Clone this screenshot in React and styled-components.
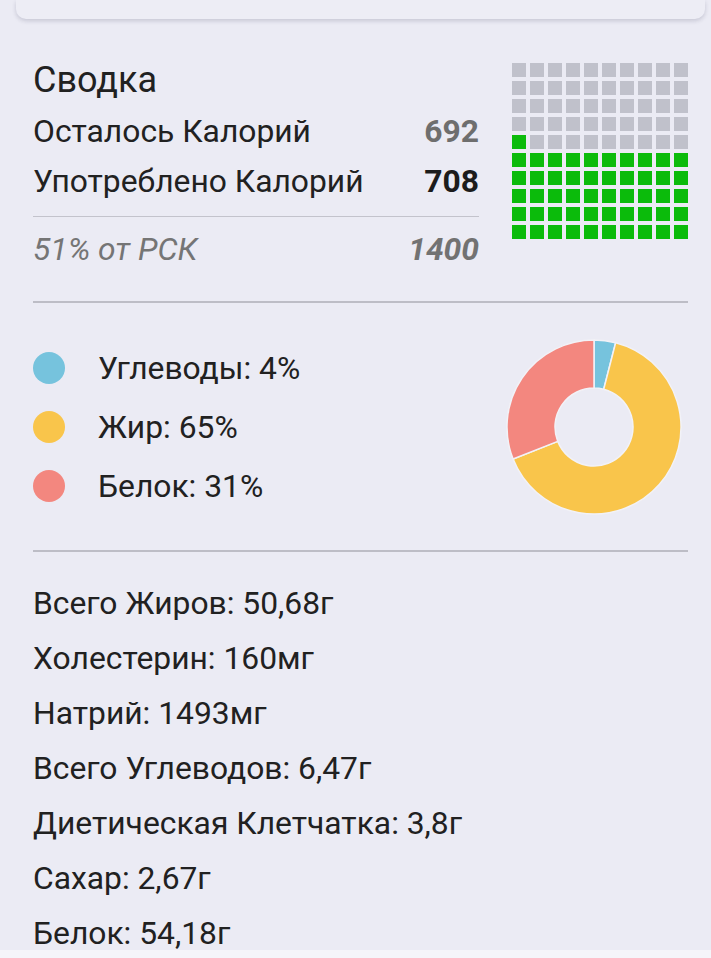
import React from 'react';
import styled, { createGlobalStyle } from 'styled-components';

const GlobalStyle = createGlobalStyle`
    html, body {
        margin: 0;
        padding: 0;
        background-color: #ebebf4;
    }
    body {
        font-family: Roboto, "Noto Sans", sans-serif;
        color: #212121;
    }
`;

const PageStyled = styled.div`
    min-height: 100vh;
    padding: 0 23px 40px 33px;
    box-sizing: border-box;
    overflow: hidden;
`;

const TopCardStyled = styled.div`
    height: 19px;
    margin: 0 -17px 0 -17px;
    background-color: #ededf5;
    border-radius: 0 0 10px 10px;
    box-shadow: 0 2px 4px rgba(40, 40, 70, 0.18);
`;

const SummaryStyled = styled.section`
    display: flex;
    gap: 33px;
    padding-top: 41px;
`;

const SummaryTextStyled = styled.div`
    flex: 1;
    display: flex;
    flex-direction: column;
`;

const TitleStyled = styled.h2`
    margin: 0 0 6px 0;
    font-size: 36px;
    line-height: 40px;
    font-weight: 400;
`;

const CalorieRowStyled = styled.div`
    display: flex;
    justify-content: space-between;
    align-items: center;
    height: 50px;
    font-size: 31.8px;
    margin-top: ${(p) => p.$offset || 0}px;
    font-style: ${(p) => (p.$muted ? 'italic' : 'normal')};
    color: ${(p) => (p.$muted ? '#757575' : '#212121')};
`;

const ValueStyled = styled.span`
    font-weight: 700;
    color: ${(p) => p.$color};
`;

const ThinRuleStyled = styled.div`
    height: 1px;
    margin-top: 10px;
    background-color: #c3c3cc;
`;

const RuleStyled = styled.div`
    height: 2px;
    margin-top: ${(p) => p.$offset}px;
    background-color: #bdbdc6;
`;

const WaffleStyled = styled.div`
    display: grid;
    grid-template-columns: repeat(10, 14px);
    grid-auto-rows: 14px;
    gap: 4px;
    margin-top: 3px;
    align-self: flex-start;
`;

const CellStyled = styled.div`
    background-color: ${(p) => (p.$filled ? '#0bbb0b' : '#c0c1cb')};
`;

const MacrosStyled = styled.section`
    display: flex;
    justify-content: space-between;
    align-items: center;
    height: 247px;
`;

const LegendStyled = styled.ul`
    list-style: none;
    margin: 0;
    padding: 0;
`;

const LegendItemStyled = styled.li`
    display: flex;
    align-items: center;
    gap: 33px;
    height: 59px;
    font-size: 31.8px;
`;

const DotStyled = styled.span`
    width: 32px;
    height: 32px;
    border-radius: 50%;
    background-color: ${(p) => p.$color};
`;

const DonutStyled = styled.svg`
    display: block;
    margin-right: 6px;
`;

const NutrientListStyled = styled.div`
    padding-top: 24px;
`;

const NutrientStyled = styled.div`
    height: 55px;
    line-height: 55px;
    font-size: 31.8px;
`;

const BottomBarStyled = styled.div`
    position: fixed;
    left: 0;
    right: 0;
    bottom: 0;
    height: 8px;
    background-color: #f5f5fa;
`;

const macros = [
    { name: 'Углеводы', pct: 4, color: '#76c3dd' },
    { name: 'Жир', pct: 65, color: '#f9c54b' },
    { name: 'Белок', pct: 31, color: '#f3877f' },
];

const nutrients = [
    'Всего Жиров: 50,68г',
    'Холестерин: 160мг',
    'Натрий: 1493мг',
    'Всего Углеводов: 6,47г',
    'Диетическая Клетчатка: 3,8г',
    'Сахар: 2,67г',
    'Белок: 54,18г',
];

const EATEN_PCT = 51;

function arcPath(cx, cy, r, ir, a0, a1) {
    const pt = (rad, a) => [cx + rad * Math.cos(a), cy + rad * Math.sin(a)];
    const large = a1 - a0 > Math.PI ? 1 : 0;
    const [x0, y0] = pt(r, a0);
    const [x1, y1] = pt(r, a1);
    const [x2, y2] = pt(ir, a1);
    const [x3, y3] = pt(ir, a0);
    return `M${x0} ${y0} A${r} ${r} 0 ${large} 1 ${x1} ${y1} L${x2} ${y2} A${ir} ${ir} 0 ${large} 0 ${x3} ${y3} Z`;
}

function Donut() {
    let start = -Math.PI / 2;
    return (
        <DonutStyled width="176" height="176" viewBox="0 0 176 176">
            {macros.map((m) => {
                const end = start + (m.pct / 100) * Math.PI * 2;
                const d = arcPath(88, 88, 87, 39, start, end);
                start = end;
                return <path key={m.name} d={d} fill={m.color} stroke="#f2f2f7" strokeWidth="1.5" />;
            })}
        </DonutStyled>
    );
}

function Waffle() {
    const cells = [];
    for (let r = 0; r < 10; r++) {
        for (let c = 0; c < 10; c++) {
            const order = (9 - r) * 10 + c;
            cells.push(<CellStyled key={`${r}-${c}`} $filled={order < EATEN_PCT} />);
        }
    }
    return <WaffleStyled>{cells}</WaffleStyled>;
}

export default function App() {
    return (
        <PageStyled>
            <GlobalStyle />
            <TopCardStyled />

            <SummaryStyled>
                <SummaryTextStyled>
                    <TitleStyled>Сводка</TitleStyled>
                    <CalorieRowStyled>
                        <span>Осталось Калорий</span>
                        <ValueStyled $color="#6e6e6e">692</ValueStyled>
                    </CalorieRowStyled>
                    <CalorieRowStyled>
                        <span>Употреблено Калорий</span>
                        <ValueStyled $color="#1c1c1c">708</ValueStyled>
                    </CalorieRowStyled>
                    <ThinRuleStyled />
                    <CalorieRowStyled $muted $offset={7}>
                        <span>51% от РСК</span>
                        <ValueStyled $color="#727272">1400</ValueStyled>
                    </CalorieRowStyled>
                </SummaryTextStyled>
                <Waffle />
            </SummaryStyled>

            <RuleStyled $offset={27} />

            <MacrosStyled>
                <LegendStyled>
                    {macros.map((m) => (
                        <LegendItemStyled key={m.name}>
                            <DotStyled $color={m.color} />
                            {m.name}: {m.pct}%
                        </LegendItemStyled>
                    ))}
                </LegendStyled>
                <Donut />
            </MacrosStyled>

            <RuleStyled $offset={0} />

            <NutrientListStyled>
                {nutrients.map((n) => (
                    <NutrientStyled key={n}>{n}</NutrientStyled>
                ))}
            </NutrientListStyled>

            <BottomBarStyled />
        </PageStyled>
    );
}
